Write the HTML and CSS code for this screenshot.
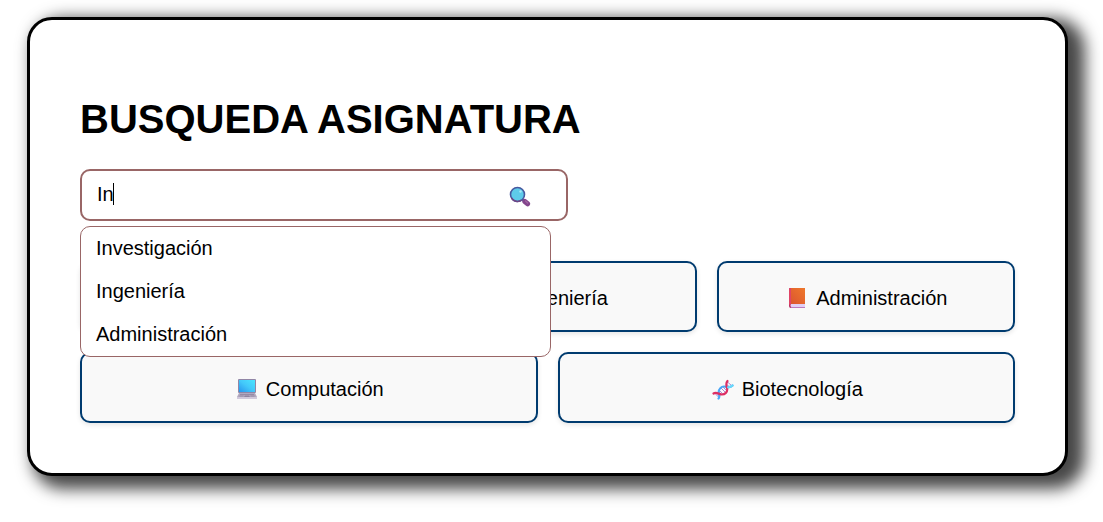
FILE: index.html
```html
<!DOCTYPE html>
<html lang="es">
<head>
<meta charset="utf-8">
<meta name="viewport" content="width=device-width, initial-scale=1">
<title>Busqueda asignatura</title>
<link rel="stylesheet" href="styles.css">
</head>
<body>
<main class="card">
  <h1 class="title">BUSQUEDA ASIGNATURA</h1>
  <form class="search">
    <input class="search-input" type="text" value="In" aria-label="Buscar asignatura" autocomplete="off">
    <span class="caret"></span>
    <svg class="search-icon" viewBox="0 0 22 22" aria-hidden="true">
      <path d="M13.500 13.500l2 2" stroke="#5b4a7c" stroke-width="2"/>
      <path d="M15.800 15.500l2.800 2.300" stroke="#83458c" stroke-width="5" stroke-linecap="round"/>
      <path d="M16.500 15l2.200 2" stroke="#a066a0" stroke-width="1.200" stroke-linecap="round"/>
      <circle cx="8.500" cy="8.500" r="7" fill="#5ecbea" stroke="#4659a0" stroke-width="1.600"/>
      <path d="M2.500 12a7 7 0 0 0 10 2.200" fill="none" stroke="#704584" stroke-width="1.500"/>
      <circle cx="11.500" cy="5.500" r="1.200" fill="#a5e8f8"/>
    </svg>
    <ul class="suggestions">
      <li class="suggestion">Investigación</li>
      <li class="suggestion">Ingeniería</li>
      <li class="suggestion">Administración</li>
    </ul>
  </form>
  <div class="subjects">
    <button class="subject" type="button">
      <svg class="icon" viewBox="0 0 22 22" aria-hidden="true"><path d="M3 1h16v20H3z" fill="#3a86d0"/></svg>
      Investigación
    </button>
    <button class="subject" type="button">
      <svg class="icon" viewBox="0 0 22 22" aria-hidden="true"><circle cx="11" cy="11" r="7" fill="none" stroke="#9b92a8" stroke-width="5"/></svg>
      Ingeniería
    </button>
    <button class="subject" type="button">
      <svg class="icon" viewBox="0 0 22 22" aria-hidden="true">
        <defs><linearGradient id="cover" x1="0" y1="1" x2="1" y2="0"><stop offset="0" stop-color="#dc5530"/><stop offset="1" stop-color="#ee782b"/></linearGradient></defs>
        <path d="M3 1q0-1 1-1h15v20H5q-2 0-2-2z" fill="#b52b62"/>
        <path d="M5 16h14v3H5.500q-1 0-1-1.500T5 16z" fill="#e1cff6"/>
        <path d="M5 0h14v16H5z" fill="url(#cover)"/>
        <path d="M3 1q0-1 2-1v16q-2 0-2 2z" fill="#e04466"/>
        <path d="M5 19h14v1H5z" fill="#bd79bd"/>
      </svg>
      Administración
    </button>
    <button class="subject" type="button">
      <svg class="icon" viewBox="0 0 22 22" aria-hidden="true">
        <defs><linearGradient id="screen" x1="0" y1="1" x2="1" y2="0"><stop offset="0" stop-color="#2796ee"/><stop offset=".5" stop-color="#43c8fa"/><stop offset="1" stop-color="#4be5ff"/></linearGradient></defs>
        <rect x="2" y="0" width="18" height="14" rx="1" fill="#9186a6"/>
        <path d="M3 1h16v12H3z" fill="url(#screen)"/>
        <path d="M3 14h16l2 4H1z" fill="#b1a8bf"/>
        <path d="M4 15.500h14M3.500 17h4m7 0h4" stroke="#8f84a0" stroke-width=".8"/>
        <path d="M9 16.500h4l1 1.500H8z" fill="#8f84a0"/>
        <path d="M1 18h20v2H1z" fill="#d1c9db"/>
      </svg>
      Computación
    </button>
    <button class="subject" type="button">
      <svg class="icon" viewBox="0 0 22 22" aria-hidden="true" fill="none" stroke-linecap="round">
        <path d="M15.500 3l4 3.500M15 5.500l2 2M9 9l4.500 4.500M11 8l3 3M7.500 11.500l3 3M3 14.500l3.500 3.500M5 14.500l2 2" stroke="#a98bd8" stroke-width="1"/>
        <path d="M6.500 19.500C8.500 17.500 6.500 15 6.700 13C7 10 9 7.500 12 7.500C15 7.500 17.500 9.500 20.500 6.500" stroke="#4aa6f6" stroke-width="2.200"/>
        <path d="M1.500 14.500C4.500 12.500 7 15.500 10 15.500C13 15.500 15.500 13 15.200 10C15 7.500 13 5 15.500 2" stroke="#dd2e63" stroke-width="2.200"/>
        <path d="M16 8.300Q18.500 8.500 20.500 6.500" stroke="#67d9fa" stroke-width="2.200"/>
      </svg>
      Biotecnología
    </button>
  </div>
</main>
</body>
</html>
```
FILE: styles.css
```css
* {
  box-sizing: border-box;
}

body {
  min-height: 100vh;
  margin: 0;
  padding: 17px 35px 17px 27px;
  background: #fff;
  color: #000;
  font: 20px/23px "Liberation Sans", Arial, sans-serif;
}

.card {
  padding: 50px;
  border: 3px solid #000;
  border-radius: 25px;
  background: #fff;
  box-shadow: 11px 7px 16px 6px rgba(0, 0, 0, 0.72);
}

.title {
  margin: 26px 0 27px;
  font-size: 40px;
  line-height: 46px;
}

.search {
  position: relative;
  width: calc(50% + 20px);
  min-width: 300px;
  margin-bottom: 40px;
}

.search-input {
  display: block;
  width: 100%;
  height: 52px;
  padding: 10px 60px 12px 15px;
  border: 2px solid #966;
  border-radius: 10px;
  outline: none;
  background: #fff;
  color: inherit;
  font: inherit;
}

.caret {
  position: absolute;
  top: 14px;
  left: 33px;
  width: 1px;
  height: 22px;
  background: #000;
}

.search-icon {
  position: absolute;
  top: 17px;
  right: 37px;
  width: 22px;
  height: 22px;
}

.suggestions {
  position: absolute;
  z-index: 1;
  top: 57px;
  left: 0;
  width: calc(100% - 17px);
  margin: 0;
  padding: 0;
  border: 1px solid #966;
  border-radius: 10px;
  background: #fff;
  list-style: none;
}

.suggestion {
  padding: 10px 15px;
}

.subjects {
  display: flex;
  flex-wrap: wrap;
  gap: 20px;
}

.subject {
  display: flex;
  flex: 1 1 260px;
  align-items: center;
  justify-content: center;
  gap: 8px;
  padding: 24px 18px 20px 20px;
  border: 2px solid #003b6f;
  border-radius: 10px;
  background: #f9f9f9;
  box-shadow: 0 2px 5px rgba(0, 0, 0, 0.1);
  color: inherit;
  font: inherit;
}

.icon {
  width: 22px;
  height: 22px;
}
```
